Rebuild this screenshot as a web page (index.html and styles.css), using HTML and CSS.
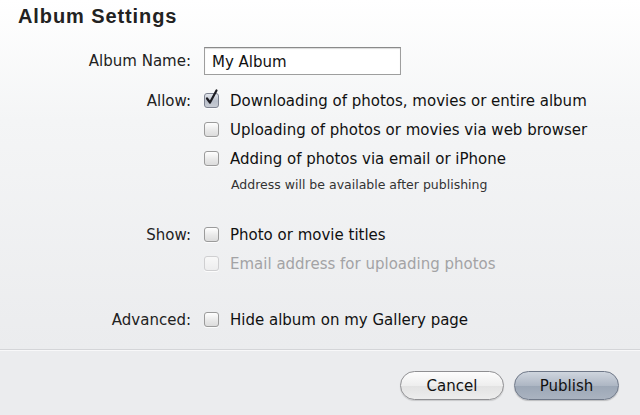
FILE: index.html
```html
<!DOCTYPE html>
<html>
<head>
<meta charset="utf-8">
<link rel="stylesheet" href="styles.css">
</head>
<body>
<div class="page">
  <h1 class="title">Album Settings</h1>
  <div class="form">
    <div class="row row-name">
      <div class="label">Album Name:</div>
      <div class="ctl"><input class="text-input" type="text" value="My Album"></div>
    </div>
    <div class="group group-allow">
      <div class="row">
        <div class="label">Allow:</div>
        <div class="ctl"><span class="cb checked"><svg width="19" height="19" viewBox="0 0 19 19"><path d="M5 9.5 L8 13.5 L14.5 1.5" fill="none" stroke="#1c1c22" stroke-width="2.2" stroke-linecap="round" stroke-linejoin="round"/></svg></span><span class="opt">Downloading of photos, movies or entire album</span></div>
      </div>
      <div class="row">
        <div class="label"></div>
        <div class="ctl"><span class="cb"></span><span class="opt">Uploading of photos or movies via web browser</span></div>
      </div>
      <div class="row">
        <div class="label"></div>
        <div class="ctl"><span class="cb"></span><span class="opt">Adding of photos via email or iPhone</span></div>
      </div>
      <div class="row row-note">
        <div class="label"></div>
        <div class="ctl"><span class="note">Address will be available after publishing</span></div>
      </div>
    </div>
    <div class="group group-show">
      <div class="row">
        <div class="label">Show:</div>
        <div class="ctl"><span class="cb"></span><span class="opt">Photo or movie titles</span></div>
      </div>
      <div class="row">
        <div class="label"></div>
        <div class="ctl disabled"><span class="cb"></span><span class="opt">Email address for uploading photos</span></div>
      </div>
    </div>
    <div class="group group-adv">
      <div class="row">
        <div class="label">Advanced:</div>
        <div class="ctl"><span class="cb"></span><span class="opt">Hide album on my Gallery page</span></div>
      </div>
    </div>
  </div>
  <div class="footer">
    <button class="btn btn-cancel">Cancel</button>
    <button class="btn btn-publish">Publish</button>
  </div>
</div>
</body>
</html>
```

FILE: styles.css
```css
html, body {
  margin: 0;
  padding: 0;
}
body {
  width: 640px;
  height: 415px;
  overflow: hidden;
  font-family: "DejaVu Sans", "Liberation Sans", sans-serif;
  color: #1a1a1a;
}
.page {
  height: 415px;
  display: flex;
  flex-direction: column;
  background: linear-gradient(#ffffff 0px, #f4f5f6 120px, #ebecee 348px);
}
.title {
  margin: 4px 0 0 18px;
  font-family: "Liberation Sans", Arial, sans-serif;
  font-size: 20px;
  line-height: 24px;
  font-weight: bold;
  letter-spacing: 0.9px;
  color: #222;
}
.form {
  flex: 1;
  display: flex;
  flex-direction: column;
}
.row {
  display: grid;
  grid-template-columns: 191px 1fr;
  column-gap: 13px;
  align-items: center;
  height: 29px;
}
.row-name {
  margin-top: 19px;
  height: 28px;
}
.label {
  text-align: right;
  font-size: 15px;
  color: #222;
}
.ctl {
  display: flex;
  align-items: center;
  font-size: 15px;
}
.text-input {
  box-sizing: border-box;
  width: 197px;
  height: 28px;
  margin: 0;
  border: 1px solid #9e9e9e;
  border-top-color: #8a8a8a;
  background: #fff;
  padding: 2px 7px 0;
  font-family: "DejaVu Sans", "Liberation Sans", sans-serif;
  font-size: 15px;
  color: #111;
  box-shadow: inset 0 1px 1px rgba(0,0,0,0.15);
  outline: none;
}
.group-allow {
  margin-top: 11px;
  display: flex;
  flex-direction: column;
}
.row-note {
  height: 22px;
}
.note {
  font-size: 12.5px;
  color: #333;
  padding-left: 27px;
}
.group-show {
  margin-top: 25px;
  display: flex;
  flex-direction: column;
}
.group-adv {
  margin-top: 27px;
}
.cb {
  position: relative;
  box-sizing: border-box;
  width: 15px;
  height: 15px;
  border: 1px solid #9b9b9b;
  border-radius: 3px;
  background: linear-gradient(#ffffff, #e9e9e9 55%, #dcdcdc);
  box-shadow: 0 1px 0 rgba(255,255,255,0.8);
  flex: none;
}
.cb.checked {
  border-color: #7d8290;
  background: linear-gradient(#e3e6ec, #b9bfca 55%, #c8ccd4);
}
.cb svg {
  position: absolute;
  left: -3px;
  top: -5px;
}
.opt {
  margin-left: 11px;
  color: #111;
}
.disabled .cb {
  border-color: #cfcfd1;
  background: linear-gradient(#f8f8f8, #ededee);
}
.disabled .opt {
  color: #a3a3a5;
}
.footer {
  height: 66px;
  border-top: 1px solid #d4d5d8;
  box-shadow: inset 0 1px 0 #f8f8f9;
  background: #ebecee;
  display: flex;
  justify-content: flex-end;
  align-items: flex-start;
  padding: 21px 21px 0 0;
  box-sizing: border-box;
  gap: 10px;
}
.btn {
  box-sizing: border-box;
  height: 29px;
  width: 105px;
  border-radius: 15px;
  font-family: "DejaVu Sans", "Liberation Sans", sans-serif;
  font-size: 15px;
  color: #111;
  padding: 0;
  margin: 0;
}
.btn-cancel {
  width: 104px;
  border: 1px solid #8f8f92;
  background: linear-gradient(#fdfdfd, #eeeeee 50%, #e2e2e2 51%, #ededed);
  box-shadow: 0 1px 1px rgba(0,0,0,0.15);
}
.btn-publish {
  border: 1px solid #6f7888;
  background: linear-gradient(#cfd5de, #aeb7c4 50%, #9ca7b6 51%, #aab3c0);
  box-shadow: 0 1px 1px rgba(0,0,0,0.2);
}
```
